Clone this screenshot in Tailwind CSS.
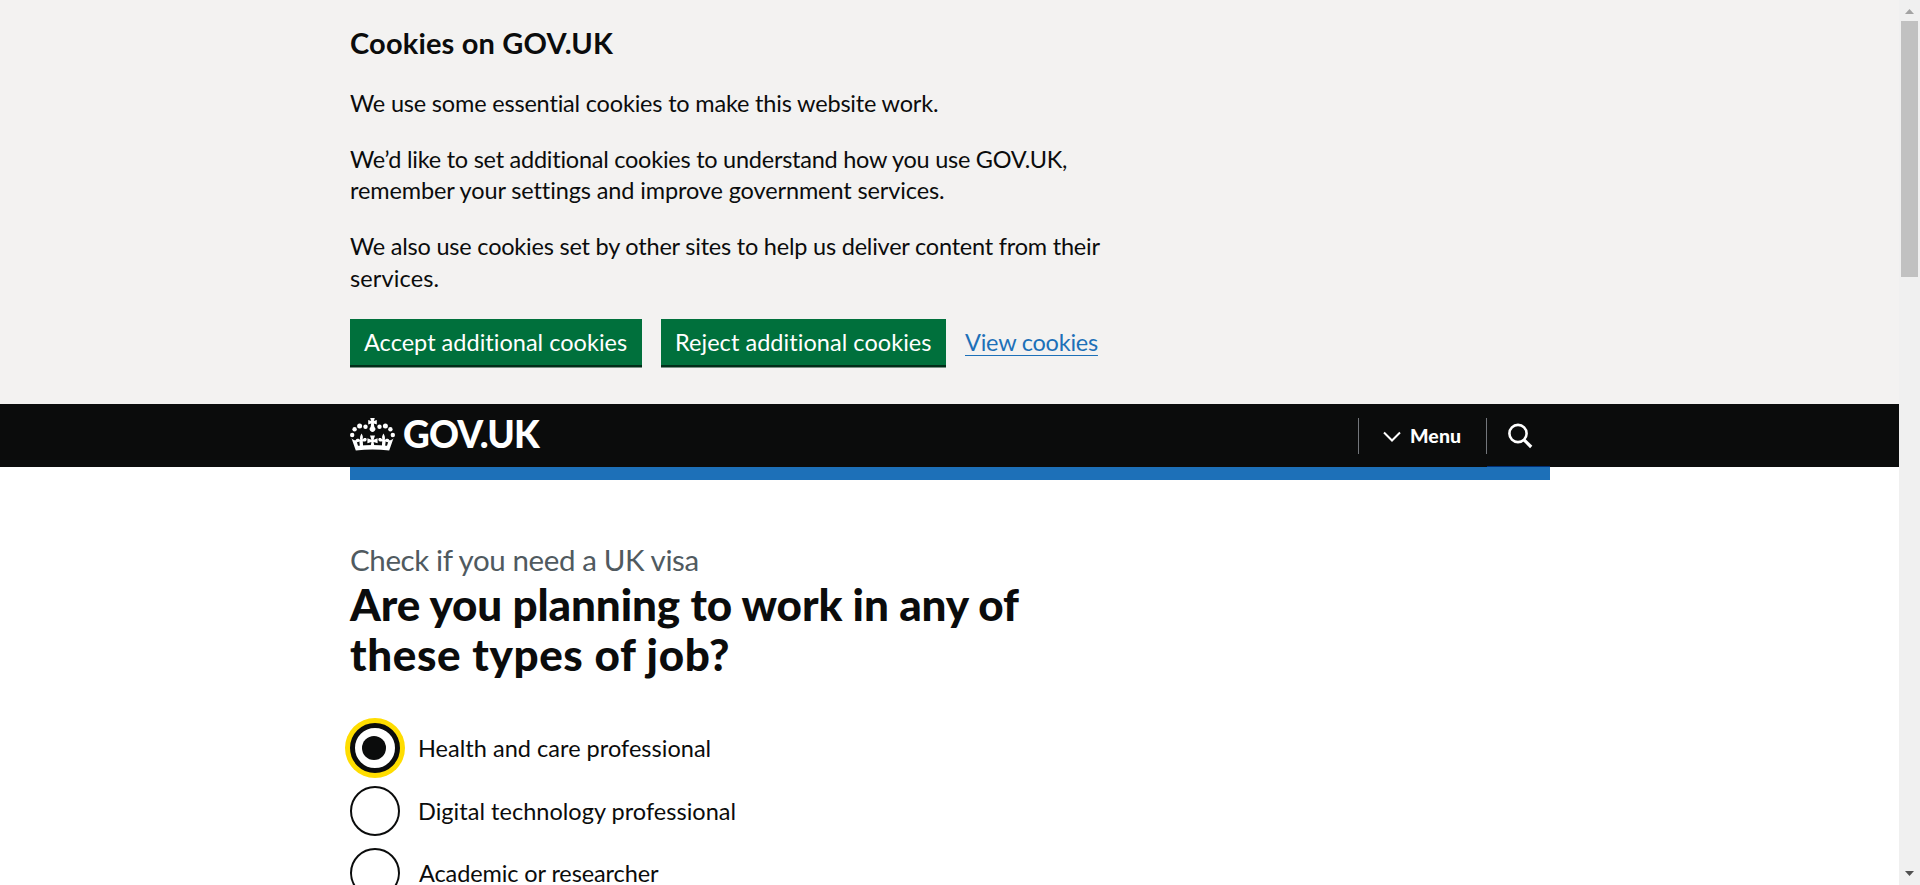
<!DOCTYPE html>
<html lang="en">
<head>
<meta charset="utf-8">
<title>Check if you need a UK visa - GOV.UK</title>
<script src="https://cdn.jsdelivr.net/npm/@tailwindcss/browser@4"></script>
</head>
<body class="flex h-[885px] overflow-hidden bg-white font-['Lato',sans-serif] text-[#0b0c0c] [font-variant-ligatures:none]">
<div class="h-[885px] w-[1899px] overflow-hidden">
  <section class="h-[404px] bg-[#f3f2f1] pl-[350px] pt-[24px]">
    <h2 class="text-[29px] font-bold leading-[37.5px] tracking-[0.172px] whitespace-nowrap">Cookies on GOV.UK</h2>
    <div class="mt-[26px] space-y-[25px] text-[23.5px] leading-[31.25px] whitespace-nowrap">
      <p class="tracking-[-0.183px]">We use some essential cookies to make this website work.</p>
      <p><span class="tracking-[-0.247px]">We’d like to set additional cookies to understand how you use GOV.UK,</span><br><span class="tracking-[-0.117px]">remember your settings and improve government services.</span></p>
      <p><span class="tracking-[-0.211px]">We also use cookies set by other sites to help us deliver content from their</span><br><span class="tracking-[0.125px]">services.</span></p>
    </div>
    <div class="mt-[25px] flex text-[23.5px] whitespace-nowrap">
      <button class="h-[46px] w-[292px] bg-[#00703c] pl-[14px] pt-[2px] text-left tracking-[0.02px] text-white shadow-[0_2.5px_0_#002d18]">Accept additional cookies</button>
      <button class="ml-[19px] h-[46px] w-[285px] bg-[#00703c] pl-[14px] pt-[2px] text-left tracking-[0.05px] text-white shadow-[0_2.5px_0_#002d18]">Reject additional cookies</button>
      <a class="ml-[19px] self-center pt-[2px] tracking-[-0.226px] text-[#1d70b8] underline decoration-1 underline-offset-4">View cookies</a>
    </div>
  </section>
  <header class="h-[63px] bg-[#0b0c0c] px-[350px] text-white">
    <div class="flex h-full w-[1200px]">
      <svg class="mt-[14px] h-[33px] w-[45px]" viewBox="0 0 45 33" fill="#fff">
        <circle cx="2.2" cy="17" r="2.2"/><circle cx="4.6" cy="11.2" r="2.2"/><circle cx="9.6" cy="8" r="2.5"/><circle cx="15.5" cy="8.8" r="2.2"/>
        <circle cx="42.8" cy="17" r="2.2"/><circle cx="40.4" cy="11.2" r="2.2"/><circle cx="35.4" cy="8" r="2.500"/><circle cx="29.5" cy="8.8" r="2.2"/>
        <path d="M20.200 0h4.600l-1 3 3-1v4.600l-3-1 .6 3.400a2.800 2.800 0 1 1-3.800 0l.6-3.400-3 1V2l3 1z"/>
        <path d="M1.500 20.300c1.300 1.500 3 2.200 4.800 2l1.700 5.500c9.500-1.200 19.500-1.200 29 0l1.700-5.500c1.800.2 3.500-.5 4.800-2L39.200 32.500c-11-1.200-22.400-1.200-33.400 0z"/>
        <path d="M11.500 15.500c1.300 2 1.900 3.700 1 6 .8-1.200 2-2 3.300-1.400 1.600.8 1 3-.5 3.400-1 .3-1.800 0-2.500-.3l.3 5h-3.200l-.6-5c-.7.700-1.500 1.200-2.500.8-1.700-.7-1.200-3.100.4-3.300 1.200-.2 2.200.4 3 1.200-.6-2.300.2-4.300 1.300-6.400zM33.500 15.500c-1.300 2-1.900 3.700-1 6-.8-1.200-2-2-3.300-1.400-1.600.8-1 3 .5 3.400 1 .3 1.800 0 2.500-.3l-.3 5h3.200l.6-5c.7.7 1.500 1.200 2.500.8 1.700-.7 1.200-3.100-.4-3.300-1.200-.2-2.200.4-3 1.200.6-2.300-.2-4.300-1.300-6.400z"/>
        <path d="M20 17.500h5l-1.400 4.300 4-1.500v5l-4-1.400.8 4.300h-3.800l.8-4.300-4 1.400v-5l4 1.500z"/>
      </svg>
      <div class="ml-[8px] mt-[5px] w-[955px] text-[37px] font-black leading-[50px] tracking-[-0.823px] whitespace-nowrap">GOV.UK</div>
      <div class="mt-[14px] flex h-[36px] w-[128px] items-center border-l border-[#73767b]">
        <svg class="ml-[24px] mt-px h-[11px] w-[18px]" viewBox="0 0 18 11" fill="none" stroke="#fff" stroke-width="2"><path d="M1 1.500l8 8 8-8"/></svg>
        <span class="-mt-px ml-[9px] text-[19.5px] font-black leading-[25px] tracking-[0.1px]">Menu</span>
      </div>
      <div class="mt-[14px] h-[36px] w-[64px] border-l border-[#73767b]">
        <svg class="ml-[20px] mt-[5px] h-[26px] w-[26px]" viewBox="0 0 26 26" fill="none" stroke="#fff" stroke-width="2.600"><circle cx="11" cy="10.500" r="8.600"/><path d="M17 16.800l7.200 7.200" stroke-width="3.200"/></svg>
      </div>
    </div>
  </header>
  <div class="ml-[350px] flex h-[13px] w-[1200px] justify-end bg-[#1d70b8]"><div class="-mt-px h-px w-[63px] bg-[#003078]"></div></div>
  <main class="pl-[350px] pt-[61px] whitespace-nowrap">
    <p class="text-[29.500px] leading-[37.5px] tracking-[-0.39px] text-[#505a5f]">Check if you need a UK visa</p>
    <h1 class="text-[44px] font-black leading-[50px]"><span class="tracking-[-0.108px]">Are you planning to work in any of</span><br><span class="tracking-[0.598px]">these types of job?</span></h1>
    <div class="mt-[43px] text-[23.5px]">
      <label class="flex h-[63px] items-start"><span class="mt-[1px] flex size-[50px] items-center rounded-full border-[5px] border-[#0b0c0c] bg-white pl-[7px] shadow-[0_0_0_5px_#ffdd00]"><i class="size-[24px] rounded-full bg-[#0b0c0c]"></i></span><span class="ml-[18px] mt-[9px] tracking-[0.03px]">Health and care professional</span></label>
      <label class="flex h-[62px] items-start"><span class="mt-[1px] size-[50px] rounded-full border-2 border-[#0b0c0c]"></span><span class="ml-[18px] mt-[9px] tracking-[0.03px]">Digital technology professional</span></label>
      <label class="flex h-[63px] items-start"><span class="mt-[1px] size-[50px] rounded-full border-2 border-[#0b0c0c]"></span><span class="ml-[19px] mt-[9px] tracking-[-0.106px]">Academic or researcher</span></label>
    </div>
  </main>
</div>
<aside class="flex h-[885px] w-[21px] flex-col items-center bg-[#f0f0f0] pt-[9px]">
  <svg class="h-[5px] w-[9px]" viewBox="0 0 9 5" fill="#a3a3a3"><path d="M4.500 0L9 5H0z"/></svg>
  <div class="mt-[7px] h-[256px] w-[17px] bg-[#c1c1c1]"></div>
  <svg class="mt-[594px] h-[5px] w-[9px]" viewBox="0 0 9 5" fill="#505050"><path d="M0 0h9L4.500 5z"/></svg>
</aside>
</body>
</html>
